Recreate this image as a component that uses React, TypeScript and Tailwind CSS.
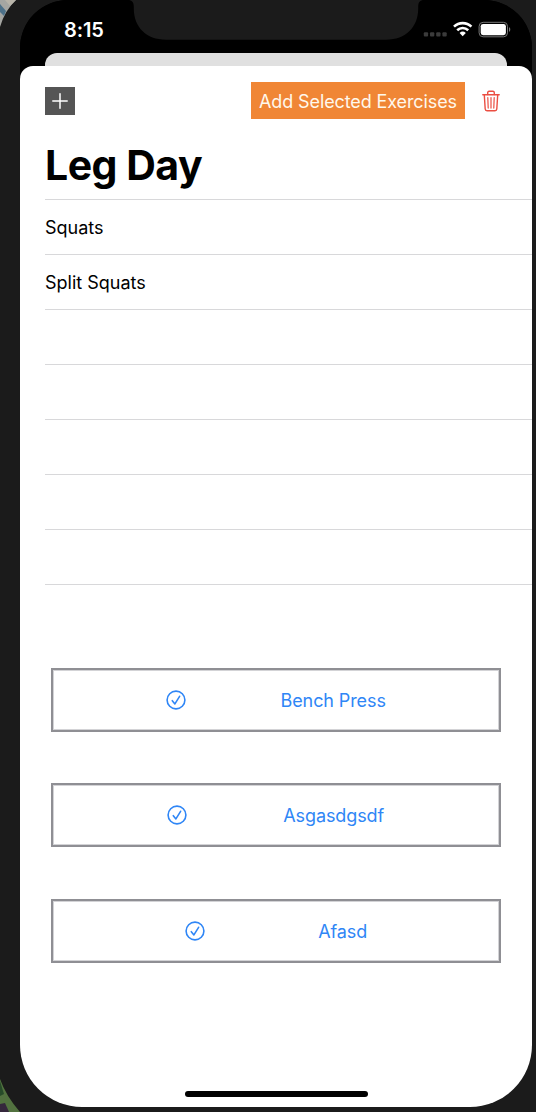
import React from "react";

function StatusBar() {
  return (
    <div className="relative flex h-[53px] shrink-0 justify-between bg-black pl-[44px] pr-[21px] text-white">
      <div className="pt-[18px] text-[20px] leading-[24px] font-semibold whitespace-nowrap tracking-[-0.1px]">8:15</div>
      <svg className="mt-[18px]" width="88" height="24" viewBox="0 0 88 24" fill="none">
        <g fill="#3b3b3b">
          <rect x="0.8" y="14.2" width="4.3" height="4.3" rx="1" />
          <rect x="7" y="14.2" width="4.3" height="4.3" rx="1" />
          <rect x="13.2" y="14.2" width="4.3" height="4.3" rx="1" />
          <rect x="19.4" y="14.2" width="4.3" height="4.3" rx="1" />
        </g>
        <g stroke="#fff" strokeWidth="2.6">
          <path d="M31 8.6a12.6 12.6 0 0 1 17.4 0" />
          <path d="M34.2 12.2a8 8 0 0 1 11 0" />
        </g>
        <path d="M36.6 15a4.6 4.6 0 0 1 6.2 0L39.7 18.2z" fill="#fff" />
        <rect x="56.1" y="4.3" width="28.4" height="14.5" rx="4" stroke="#777" strokeWidth="1" />
        <rect x="57.7" y="5.9" width="25.2" height="11.3" rx="2.4" fill="#fff" />
        <path d="M86 9.2c1.7.5 1.7 4.1 0 4.6z" fill="#777" />
      </svg>
      <svg className="absolute left-[108px] top-0" width="296" height="40" viewBox="0 0 296 40">
        <path d="M0 0C4 0 5.800 2 5.800 7V9C6 27 18 39.700 38 39.700H258C278 39.700 290 27 290.200 9V7C290.200 2 292 0 296 0Z" fill="#1b1b1b" />
      </svg>
    </div>
  );
}

function CheckCircle() {
  return (
    <svg className="shrink-0" width="20" height="20" viewBox="0 0 20 20" fill="none" stroke="#2f86f6" strokeLinecap="round" strokeLinejoin="round">
      <circle cx="10" cy="10" r="8.900" strokeWidth="1.6" />
      <path d="M6.300 10.700 8.900 13.900 13.600 6.300" strokeWidth="1.6" />
    </svg>
  );
}

function TrashIcon() {
  return (
    <svg width="18" height="22" viewBox="0 0 18 22" fill="none" stroke="#eb4e42" strokeWidth="1.4" strokeLinecap="round" strokeLinejoin="round">
      <path d="M0.800 4.700H17.200" />
      <path d="M5.700 4.500V2.700Q5.700 1.300 7.100 1.300H10.900Q12.300 1.300 12.300 2.700V4.500" />
      <path d="M2.300 4.900 3.200 19Q3.300 20.800 5 20.800H13Q14.700 20.800 14.800 19L15.700 4.900" />
      <path d="M5.800 7.500 6.200 18.100M9 7.500V18.100M12.200 7.500 11.800 18.100" strokeWidth="1.200" />
    </svg>
  );
}

const rows = ["Squats", "Split Squats", "", "", "", "", ""];
const choices = [
  { name: "Bench Press", width: "w-[105px]" },
  { name: "Asgasdgsdf", width: "w-[102px]" },
  { name: "Afasd", width: "w-[48px]" },
];

export default function App() {
  return (
    <div className="relative h-[1112px] w-[536px] overflow-hidden bg-[#1b1b1b] pl-[20px] font-['Inter',sans-serif] text-black">
      <svg className="absolute left-0 top-0" width="18" height="30" viewBox="0 0 18 30">
        <path d="M0 0H16Q5 10 0 27Z" fill="#a5a6a2" />
        <path d="M0 4 6 11 4 16 0 12Z" fill="#4d7189" />
        <path d="M5 0H16L10 6Z" fill="#b8b4a9" />
      </svg>
      <svg className="absolute bottom-0 left-0" width="22" height="36" viewBox="0 0 22 36">
        <path d="M0 3Q6 20 20 36H0Z" fill="#52723f" />
        <path d="M0 5 4 18 0 20Z" fill="#274b29" />
        <path d="M0 28 5 27 9 36H0Z" fill="#35273c" />
      </svg>
      <div className="relative flex h-[1107px] w-[512px] flex-col overflow-hidden rounded-t-[48px] rounded-b-[62px] bg-black">
        <StatusBar />
        <div className="mx-[25px] h-[13px] shrink-0 rounded-t-[12px] bg-[#e0e0e0]" />
        <main className="flex flex-1 flex-col rounded-t-[13px] bg-white">
          <header className="flex h-[69px] shrink-0 items-center pl-[25px] pr-[32px]">
            <button className="flex h-[28px] w-[30px] items-center justify-center bg-[#555]" aria-label="Add">
              <svg width="16" height="16" viewBox="0 0 16 16" stroke="#fff" strokeWidth="1.500" strokeLinecap="round">
                <path d="M8 .8V15.200M.8 8H15.200" />
              </svg>
            </button>
            <button className="ml-auto mr-[17px] h-[37px] w-[214px] bg-[#f08635] pt-px text-[18px] tracking-[-0.11px] whitespace-nowrap text-[#fff8ec]">
              Add Selected Exercises
            </button>
            <button aria-label="Delete"><TrashIcon /></button>
          </header>
          <h1 className="h-[64px] shrink-0 pl-[25px] pt-[5px] text-[41px] leading-[50px] font-bold tracking-[-0.5px] whitespace-nowrap">Leg Day</h1>
          <ul className="ml-[25px] border-t border-[#d8d8da]">
            {rows.map((row, i) => (
              <li key={i} className="flex h-[55px] items-center border-b border-[#d8d8da] pt-px text-[18px] whitespace-nowrap">
                {row}
              </li>
            ))}
          </ul>
          <section className="mt-[83px] flex flex-col gap-[51.300px] pl-[31px] pr-[31px]">
            {choices.map(({ name, width }) => (
              <button key={name} className="flex h-[64px] items-center justify-evenly border-2 border-[#8f8f94] px-[19px] text-[18px] tracking-[-0.1px] whitespace-nowrap text-[#2f86f6] shadow-[inset_0_0_0_1px_#d3d3d6]">
                <CheckCircle />
                <span className={"flex justify-center pt-px " + width}>{name}</span>
              </button>
            ))}
          </section>
          <div className="mx-auto mt-auto mb-[10px] h-[6px] w-[183px] rounded-full bg-black" />
        </main>
      </div>
    </div>
  );
}
